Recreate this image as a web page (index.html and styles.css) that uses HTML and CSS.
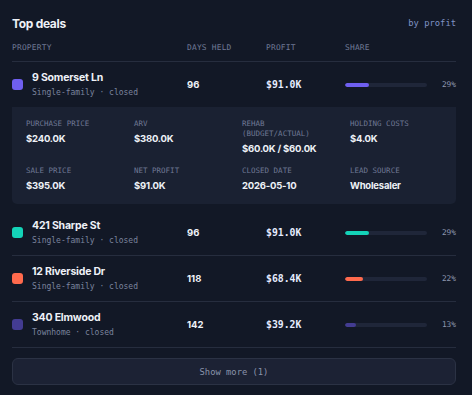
FILE: index.html
```html
<!DOCTYPE html>
<html>
<head>
  <title>Top deals</title>
  <link rel="stylesheet" href="styles.css">
</head>
<body>
  <div class="card">
    <div class="card-head">
      <h2>Top deals</h2>
      <span class="sort">by profit</span>
    </div>

    <div class="grid head-row">
      <div>PROPERTY</div>
      <div>DAYS HELD</div>
      <div>PROFIT</div>
      <div>SHARE</div>
    </div>

    <div class="grid row">
      <div class="prop">
        <span class="dot" style="background:#6f5ff0"></span>
        <div>
          <div class="name">9 Somerset Ln</div>
          <div class="sub">Single-family · closed</div>
        </div>
      </div>
      <div class="days">96</div>
      <div class="profit">$91.0K</div>
      <div class="share">
        <div class="track"><div class="fill" style="width:29%;background:#6f5ff0"></div></div>
        <span class="pct">29%</span>
      </div>
    </div>

    <div class="details">
      <div class="item"><div class="label">PURCHASE PRICE</div><div class="value">$240.0K</div></div>
      <div class="item"><div class="label">ARV</div><div class="value">$380.0K</div></div>
      <div class="item"><div class="label">REHAB (BUDGET/ACTUAL)</div><div class="value">$60.0K / $60.0K</div></div>
      <div class="item"><div class="label">HOLDING COSTS</div><div class="value">$4.0K</div></div>
      <div class="item"><div class="label">SALE PRICE</div><div class="value">$395.0K</div></div>
      <div class="item"><div class="label">NET PROFIT</div><div class="value">$91.0K</div></div>
      <div class="item"><div class="label">CLOSED DATE</div><div class="value">2026-05-10</div></div>
      <div class="item"><div class="label">LEAD SOURCE</div><div class="value">Wholesaler</div></div>
    </div>

    <div class="grid row">
      <div class="prop">
        <span class="dot" style="background:#14d3b8"></span>
        <div>
          <div class="name">421 Sharpe St</div>
          <div class="sub">Single-family · closed</div>
        </div>
      </div>
      <div class="days">96</div>
      <div class="profit">$91.0K</div>
      <div class="share">
        <div class="track"><div class="fill" style="width:29%;background:#14d3b8"></div></div>
        <span class="pct">29%</span>
      </div>
    </div>

    <div class="grid row">
      <div class="prop">
        <span class="dot" style="background:#ff6a4d"></span>
        <div>
          <div class="name">12 Riverside Dr</div>
          <div class="sub">Single-family · closed</div>
        </div>
      </div>
      <div class="days">118</div>
      <div class="profit">$68.4K</div>
      <div class="share">
        <div class="track"><div class="fill" style="width:22%;background:#ff6a4d"></div></div>
        <span class="pct">22%</span>
      </div>
    </div>

    <div class="grid row">
      <div class="prop">
        <span class="dot" style="background:#433c92"></span>
        <div>
          <div class="name">340 Elmwood</div>
          <div class="sub">Townhome · closed</div>
        </div>
      </div>
      <div class="days">142</div>
      <div class="profit">$39.2K</div>
      <div class="share">
        <div class="track"><div class="fill" style="width:13%;background:#433c92"></div></div>
        <span class="pct">13%</span>
      </div>
    </div>

    <button class="more">Show more (1)</button>
  </div>
</body>
</html>
```

FILE: styles.css
```css
body {
  margin: 0;
  background: #121826;
  color: #eef1f7;
  font-family: Inter, "Open Sans", sans-serif;
}
.card {
  padding: 13px 16px 0 12px;
}
.card-head {
  display: flex;
  justify-content: space-between;
  align-items: center;
  height: 20px;
}
h2 {
  margin: 0;
  font-size: 12px;
  font-weight: 700;
  letter-spacing: -0.3px;
}
.sort {
  font-family: "DejaVu Sans Mono", monospace;
  font-size: 8.8px;
  color: #7f93c4;
}
.grid {
  display: grid;
  grid-template-columns: 175px 79px 79px 1fr;
  align-items: center;
}
.head-row {
  margin-top: 8px;
  height: 12px;
  padding-bottom: 8px;
  border-bottom: 1px solid #262d3e;
  font-family: "DejaVu Sans Mono", monospace;
  font-size: 7.9px;
  color: #6f7894;
  letter-spacing: 0.2px;
}
.row {
  padding: 8px 0;
  border-bottom: 1px solid #262d3e;
}
.prop {
  display: flex;
  align-items: center;
  gap: 9px;
}
.dot {
  width: 11px;
  height: 11px;
  border-radius: 3px;
  flex: none;
}
.name {
  font-size: 10.5px;
  font-weight: 700;
  line-height: 16px;
  letter-spacing: -0.2px;
}
.sub {
  font-family: "DejaVu Sans Mono", monospace;
  font-size: 8px;
  line-height: 13px;
  color: #7b849e;
}
.days {
  font-size: 9.5px;
  font-weight: 700;
}
.profit {
  font-family: "DejaVu Sans Mono", monospace;
  font-size: 9.8px;
  font-weight: 700;
  color: #e6ecff;
}
.share {
  display: flex;
  align-items: center;
  justify-content: space-between;
}
.track {
  width: 82px;
  height: 4px;
  border-radius: 2px;
  background: #1f2639;
  overflow: hidden;
}
.fill {
  height: 100%;
  border-radius: 2px;
}
.pct {
  font-family: "DejaVu Sans Mono", monospace;
  font-size: 7.8px;
  color: #8c95ad;
}
.details {
  display: grid;
  grid-template-columns: repeat(4, 1fr);
  column-gap: 16px;
  row-gap: 10px;
  margin-top: -1px;
  margin-bottom: 6px;
  padding: 12px 14px 11px 14px;
  background: #1a2132;
  border-radius: 0 0 5px 5px;
}
.label {
  font-family: "DejaVu Sans Mono", monospace;
  font-size: 7.5px;
  line-height: 10px;
  color: #6f7894;
}
.value {
  margin-top: 3px;
  font-size: 9.5px;
  font-weight: 700;
  line-height: 14px;
  letter-spacing: -0.2px;
}
.more {
  display: block;
  width: 100%;
  height: 27px;
  margin-top: 10px;
  background: #1c2234;
  border: 1px solid #2b3244;
  border-radius: 6px;
  color: #8a93ab;
  font-family: "DejaVu Sans Mono", monospace;
  font-size: 8.8px;
}
```
